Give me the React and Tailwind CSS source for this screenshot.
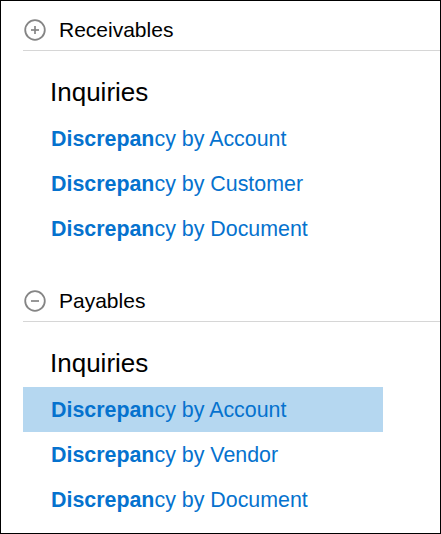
import React from "react";

function PlusMinus({ minus }) {
  return (
    <svg width="22" height="22" viewBox="0 0 22 22" className="shrink-0">
      <circle cx="11" cy="11" r="9.8" fill="none" stroke="#858585" strokeWidth="1.8" />
      <line x1="7" y1="11" x2="15" y2="11" stroke="#858585" strokeWidth="1.7" />
      {!minus && <line x1="11" y1="7" x2="11" y2="15" stroke="#858585" strokeWidth="1.7" />}
    </svg>
  );
}

function Row({ label, active }) {
  return (
    <div
      className={
        "h-[45px] w-[360px] flex items-center pl-[28px] pt-[1px] text-[21.4px] text-[#0572ce] " +
        (active ? "bg-[#b5d7f0]" : "")
      }
    >
      <span className="font-bold">Discrepan</span>
      <span>cy by {label}</span>
    </div>
  );
}

function Section({ title, minus, rows, activeIndex }) {
  return (
    <div>
      <div className="h-[50px] border-b border-[#d6d6d6] flex items-center pt-[8px]">
        <div className="ml-[1px] mr-[13px]">
          <PlusMinus minus={minus} />
        </div>
        <span className="text-[21px] text-black">{title}</span>
      </div>
      <div className="h-[65px] pt-[26px] pl-[27px] text-[26px] leading-[30px] text-black">Inquiries</div>
      {rows.map((r, i) => (
        <Row key={r} label={r} active={i === activeIndex} />
      ))}
    </div>
  );
}

export default function App() {
  return (
    <div
      className="w-[441px] h-[534px] border border-black bg-white overflow-hidden pl-[22px]"
      style={{ fontFamily: '"Liberation Sans", Arial, sans-serif' }}
    >
      <Section title="Receivables" rows={["Account", "Customer", "Document"]} activeIndex={-1} />
      <div className="h-[21px]" />
      <Section title="Payables" minus rows={["Account", "Vendor", "Document"]} activeIndex={0} />
    </div>
  );
}
